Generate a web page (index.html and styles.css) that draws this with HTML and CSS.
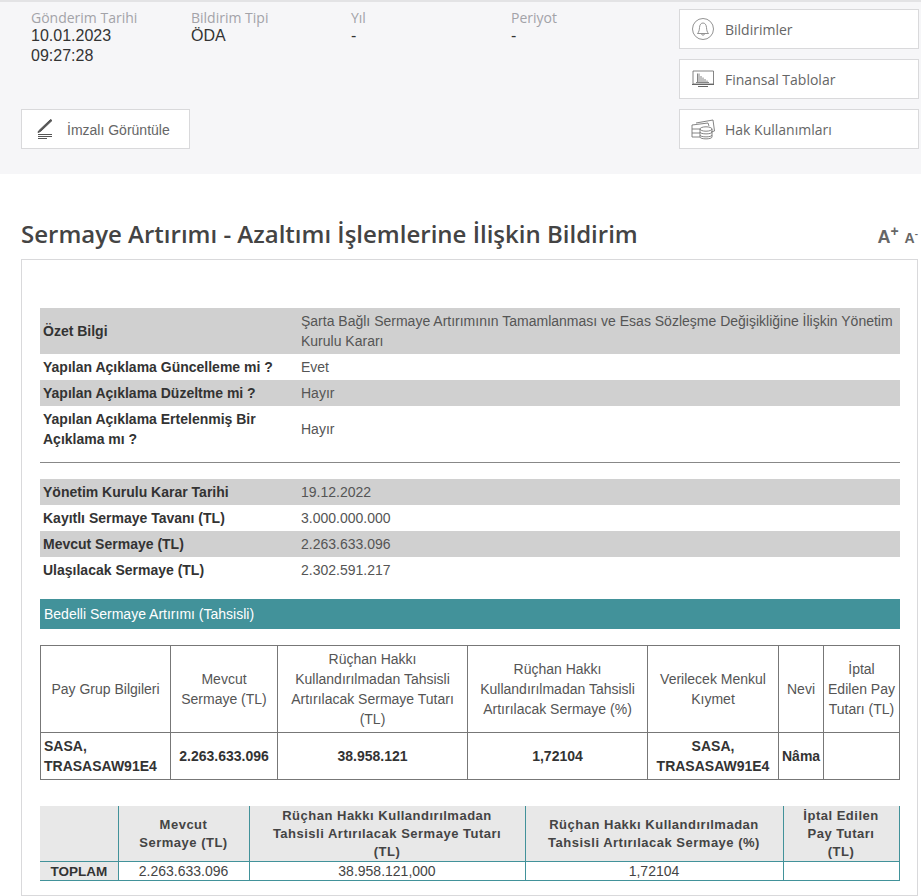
FILE: index.html
```html
<!DOCTYPE html>
<html lang="tr">
<head>
    <meta charset="UTF-8">
    <meta name="viewport" content="width=device-width, initial-scale=1.0">
    <title>Sermaye Artırımı - Azaltımı İşlemlerine İlişkin Bildirim</title>
    <link rel="stylesheet" href="styles.css">
</head>
<body>
    <div class="top-bar">
        <div class="top-left">
            <div class="meta-row">
                <div class="meta-item">
                    <div class="meta-label">Gönderim Tarihi</div>
                    <div class="meta-value">10.01.2023 09:27:28</div>
                </div>
                <div class="meta-item">
                    <div class="meta-label">Bildirim Tipi</div>
                    <div class="meta-value">ÖDA</div>
                </div>
                <div class="meta-item">
                    <div class="meta-label">Yıl</div>
                    <div class="meta-value">-</div>
                </div>
                <div class="meta-item">
                    <div class="meta-label">Periyot</div>
                    <div class="meta-value">-</div>
                </div>
            </div>
            <a class="sign-btn">
                <svg class="sign-icon" width="16" height="22" viewBox="0 0 16 22" fill="none" stroke="#555" stroke-width="1">
                    <path d="M1.5 13 L13.5 1.5 L15 2.5 L3.5 13.5 L1 14.5 Z" fill="#555"/>
                    <path d="M1 16.5H15M1 18.5H15M1 20.5H10"/>
                </svg>
                <span>İmzalı Görüntüle</span>
            </a>
        </div>
        <div class="top-right">
            <a class="side-btn">
                <span class="side-icon">
                    <svg width="22" height="22" viewBox="0 0 22 22" fill="none" stroke="#777" stroke-width="0.8">
                        <circle cx="11" cy="11" r="10.5"/>
                        <path d="M5.5 15.5 C7 14 7.3 12 7.5 9.5 C7.7 6.8 9 5 11 5 C13 5 14.3 6.8 14.5 9.5 C14.7 12 15 14 16.5 15.5 Z"/>
                        <path d="M9.5 16 C9.8 17.6 12.2 17.6 12.5 16"/>
                    </svg>
                </span>
                <span>Bildirimler</span>
            </a>
            <a class="side-btn">
                <span class="side-icon">
                    <svg width="22" height="18" viewBox="0 0 22 18" fill="none" stroke="#666" stroke-width="0.8">
                        <path d="M1 1H21.5V14H1Z"/>
                        <path d="M5.5 12V3.5M7 12V3.5M9 12V6M11 12V7.5M13 12V9M15 12V10.5M4 12.5H17"/>
                        <path d="M0 14.5H22M6 16.5H16" stroke-width="1.2"/>
                    </svg>
                </span>
                <span>Finansal Tablolar</span>
            </a>
            <a class="side-btn">
                <span class="side-icon">
                    <svg width="24" height="22" viewBox="0 0 24 22" fill="none" stroke="#777" stroke-width="0.9">
                        <path d="M5 5 L22 2 L23.5 13 L20 14"/>
                        <path d="M1 7 L17 5 L18 8"/>
                        <path d="M1 7V19H9"/>
                        <path d="M1 11H9M1 15H9"/>
                        <ellipse cx="15" cy="11" rx="6" ry="2.2"/>
                        <path d="M9 11V19C9 21.5 21 21.5 21 19V11"/>
                        <path d="M9 14C9 16.5 21 16.5 21 14M9 17C9 19.5 21 19.5 21 17"/>
                    </svg>
                </span>
                <span>Hak Kullanımları</span>
            </a>
        </div>
    </div>

    <div class="title-row">
        <h1>Sermaye Artırımı - Azaltımı İşlemlerine İlişkin Bildirim</h1>
        <div class="font-size">
            <span class="size-big">A<sup>+</sup></span>
            <span class="size-small">A<sup>-</sup></span>
        </div>
    </div>

    <div class="card">
        <table class="info-table">
            <tr class="shaded">
                <td class="info-label">Özet Bilgi</td>
                <td class="info-value">Şarta Bağlı Sermaye Artırımının Tamamlanması ve Esas Sözleşme Değişikliğine İlişkin Yönetim Kurulu Kararı</td>
            </tr>
            <tr>
                <td class="info-label">Yapılan Açıklama Güncelleme mi ?</td>
                <td class="info-value">Evet</td>
            </tr>
            <tr class="shaded">
                <td class="info-label">Yapılan Açıklama Düzeltme mi ?</td>
                <td class="info-value">Hayır</td>
            </tr>
            <tr>
                <td class="info-label">Yapılan Açıklama Ertelenmiş Bir Açıklama mı ?</td>
                <td class="info-value">Hayır</td>
            </tr>
        </table>

        <hr class="divider">

        <table class="info-table">
            <tr class="shaded">
                <td class="info-label">Yönetim Kurulu Karar Tarihi</td>
                <td class="info-value">19.12.2022</td>
            </tr>
            <tr>
                <td class="info-label">Kayıtlı Sermaye Tavanı (TL)</td>
                <td class="info-value">3.000.000.000</td>
            </tr>
            <tr class="shaded">
                <td class="info-label">Mevcut Sermaye (TL)</td>
                <td class="info-value">2.263.633.096</td>
            </tr>
            <tr>
                <td class="info-label">Ulaşılacak Sermaye (TL)</td>
                <td class="info-value">2.302.591.217</td>
            </tr>
        </table>

        <div class="section-head">Bedelli Sermaye Artırımı (Tahsisli)</div>

        <table class="group-table">
            <colgroup>
                <col class="g1"><col class="g2"><col class="g3"><col class="g4"><col class="g5"><col class="g6"><col class="g7">
            </colgroup>
            <tr class="group-head">
                <td>Pay Grup Bilgileri</td>
                <td>Mevcut Sermaye (TL)</td>
                <td>Rüçhan Hakkı Kullandırılmadan Tahsisli Artırılacak Sermaye Tutarı (TL)</td>
                <td>Rüçhan Hakkı Kullandırılmadan Tahsisli Artırılacak Sermaye (%)</td>
                <td>Verilecek Menkul Kıymet</td>
                <td>Nevi</td>
                <td class="narrow">İptal Edilen Pay Tutarı (TL)</td>
            </tr>
            <tr class="group-row">
                <td class="left">SASA, TRASASAW91E4</td>
                <td>2.263.633.096</td>
                <td>38.958.121</td>
                <td>1,72104</td>
                <td>SASA, TRASASAW91E4</td>
                <td>Nâma</td>
                <td></td>
            </tr>
        </table>

        <table class="total-table">
            <colgroup>
                <col class="t1"><col class="t2"><col class="t3"><col class="t4"><col class="t5">
            </colgroup>
            <tr class="total-head">
                <td></td>
                <td>Mevcut Sermaye (TL)</td>
                <td>Rüçhan Hakkı Kullandırılmadan Tahsisli Artırılacak Sermaye Tutarı (TL)</td>
                <td>Rüçhan Hakkı Kullandırılmadan Tahsisli Artırılacak Sermaye (%)</td>
                <td>İptal Edilen Pay Tutarı (TL)</td>
            </tr>
            <tr class="total-row">
                <td class="total-label">TOPLAM</td>
                <td>2.263.633.096</td>
                <td>38.958.121,000</td>
                <td>1,72104</td>
                <td></td>
            </tr>
        </table>
    </div>
</body>
</html>
```

FILE: styles.css
```css
html, body {
    height: 896px;
    overflow: hidden;
}
body {
    margin: 0;
    background: #fff;
    font-family: "Liberation Sans", Arial, sans-serif;
    font-size: 14px;
    color: #444;
}
.top-bar {
    display: flex;
    justify-content: space-between;
    height: 172px;
    background: #f6f6f8;
    border-top: 2px solid #e3e3e5;
}
.top-left {
    width: 650px;
    padding-left: 21px;
}
.meta-row {
    display: flex;
    height: 107px;
    padding-left: 10px;
    padding-top: 7px;
    box-sizing: border-box;
}
.meta-item {
    width: 160px;
}
.meta-label {
    font-family: "Open Sans", sans-serif;
    font-size: 14px;
    line-height: 17px;
    color: #a3a3a8;
}
.meta-value {
    width: 100px;
    font-size: 16px;
    line-height: 20px;
    color: #333;
}
.sign-btn {
    display: flex;
    align-items: center;
    width: 169px;
    height: 40px;
    box-sizing: border-box;
    background: #fff;
    border: 1px solid #d9d9db;
    color: #666;
    font-size: 14px;
}
.sign-btn span {
    padding-top: 2px;
}
.sign-icon {
    margin-left: 15px;
    margin-right: 14px;
}
.top-right {
    display: flex;
    flex-direction: column;
    gap: 10px;
    width: 240px;
    margin-right: 2px;
    padding-top: 7px;
}
.side-btn {
    display: flex;
    align-items: center;
    height: 40px;
    box-sizing: border-box;
    background: #fff;
    border: 1px solid #d9d9db;
    font-family: "Open Sans", sans-serif;
    font-size: 14px;
    color: #666;
}
.side-icon {
    display: flex;
    justify-content: center;
    width: 45px;
}
.title-row {
    display: flex;
    justify-content: space-between;
    align-items: flex-end;
    height: 85px;
    padding-left: 21px;
}
h1 {
    margin: 0 0 8px;
    font-family: "Open Sans", sans-serif;
    font-size: 24px;
    font-weight: 600;
    line-height: 34px;
    color: #444;
}
.font-size {
    display: flex;
    align-items: baseline;
    gap: 6px;
    margin-right: 3px;
    padding-bottom: 11px;
    font-weight: bold;
    color: #666;
    white-space: nowrap;
}
.font-size sup {
    font-size: 70%;
    line-height: 0;
}
.size-big {
    font-size: 18px;
}
.size-big sup {
    font-size: 14px;
}
.size-small {
    font-size: 14px;
}
.card {
    margin: 0 3px 0 21px;
    height: 637px;
    box-sizing: border-box;
    padding: 48px 17px 0 18px;
    border: 1px solid #d9d9db;
}
table {
    border-collapse: collapse;
    width: 860px;
    table-layout: fixed;
}
.info-table td {
    padding: 3px 2px;
    line-height: 20px;
    vertical-align: middle;
}
.info-table tr {
    height: 26px;
}
.shaded {
    background: #d0d0d0;
}
.info-table .info-label {
    width: 254px;
    padding-left: 3px;
    font-weight: bold;
    color: #333;
}
.info-value {
    color: #555;
}
.divider {
    margin: 10px 0 16px;
    border: 0;
    border-top: 1px solid #888;
}
.section-head {
    margin-top: 16px;
    height: 30px;
    padding-left: 4px;
    background: #42929a;
    color: #fff;
    line-height: 30px;
}
.group-table {
    margin-top: 16px;
    width: 859px;
}
.group-table td {
    border: 1px solid #777;
    padding: 3px;
    text-align: center;
    line-height: 20px;
    color: #555;
}
.group-table td.narrow {
    padding: 3px 4px;
}
.g1 { width: 130px; }
.g2 { width: 107px; }
.g3 { width: 190px; }
.g4 { width: 180px; }
.g5 { width: 131px; }
.g6 { width: 45px; }
.g7 { width: 76px; }
.group-head {
    height: 87px;
}
.group-row {
    height: 47px;
}
.group-row td {
    font-weight: bold;
    color: #333;
}
.group-row td.left {
    text-align: left;
}
.total-table {
    margin-top: 26px;
    width: 859px;
}
.total-table td {
    border: 1px solid #42929a;
    border-top: 0;
    text-align: center;
    padding: 0 3px;
    color: #444;
}
.t1 { width: 78px; }
.t2 { width: 131px; }
.t3 { width: 276px; }
.t4 { width: 258px; }
.t5 { width: 116px; }
.total-table tr > td:first-child {
    border-left: 0;
}
.total-head {
    height: 54px;
}
.total-table .total-head td {
    background: #e8e8e8;
    padding: 1px 16px 0;
    font-size: 13px;
    font-weight: bold;
    line-height: 18px;
    letter-spacing: 0.5px;
    color: #444;
}
.total-row {
    height: 19px;
}
.total-table .total-label {
    background: #e8e8e8;
    font-size: 13.5px;
    font-weight: bold;
    color: #333;
}
```
